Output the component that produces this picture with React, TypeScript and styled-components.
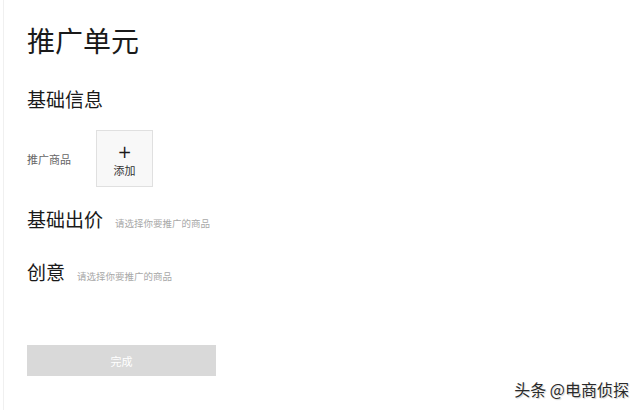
import React from 'react';
import styled, { createGlobalStyle } from 'styled-components';

const Global = createGlobalStyle`
    html, body {
        margin: 0;
        padding: 0;
        background: #ffffff;
    }
    body {
        font-family: "Noto Sans CJK SC", "Noto Sans", sans-serif;
        color: #222222;
    }
`;

const Page = styled.div`
    position: relative;
    width: 640px;
    height: 410px;
    box-sizing: border-box;
    overflow: hidden;
`;

const Panel = styled.main`
    margin-left: 3px;
    height: 100%;
    border-left: 1px solid #f0f0f0;
    padding: 20px 0 0 23px;
    box-sizing: border-box;
`;

const Title = styled.h1`
    margin: 0;
    font-size: 28px;
    font-weight: 400;
    line-height: 40px;
    color: #1a1a1a;
`;

const Section = styled.section<{ $gap: number }>`
    margin-top: ${(p) => p.$gap}px;
    display: flex;
    align-items: baseline;
    gap: 12px;
`;

const Heading = styled.h2`
    margin: 0;
    font-size: 19px;
    font-weight: 400;
    line-height: 26px;
    color: #1a1a1a;
`;

const Hint = styled.span`
    font-size: 9.5px;
    color: #a8a8a8;
`;

const Field = styled.div`
    margin-top: 18px;
    display: flex;
    align-items: center;
`;

const Label = styled.span`
    width: 69px;
    font-size: 11px;
    color: #666666;
`;

const AddBox = styled.button`
    width: 57px;
    height: 57px;
    box-sizing: border-box;
    border: 1px solid #e0e0e0;
    background: #f8f8f8;
    padding: 2px 0 0;
    display: flex;
    flex-direction: column;
    align-items: center;
    justify-content: center;
    font-family: inherit;
    cursor: pointer;
`;

const Plus = styled.span`
    font-family: "DejaVu Sans", sans-serif;
    font-size: 17px;
    line-height: 18px;
    margin-bottom: 2px;
    color: #1a1a1a;
`;

const AddText = styled.span`
    font-size: 11px;
    line-height: 14px;
    color: #333333;
`;

const Submit = styled.button`
    margin-top: 60px;
    width: 189px;
    height: 31px;
    border: none;
    background: #d9d9d9;
    color: #ffffff;
    font-family: inherit;
    font-size: 11px;
    display: block;
`;

const Watermark = styled.div`
    position: absolute;
    right: 11px;
    bottom: 9px;
    font-size: 16px;
    line-height: 23px;
    color: #2a2a2a;
    text-shadow: 0 0 2px rgba(255, 255, 255, 0.9), 1px 1px 1px rgba(0, 0, 0, 0.2);
`;

export default function App() {
    return (
        <Page>
            <Global />
            <Panel>
                <Title>推广单元</Title>
                <Section $gap={26}>
                    <Heading>基础信息</Heading>
                </Section>
                <Field>
                    <Label>推广商品</Label>
                    <AddBox>
                        <Plus>+</Plus>
                        <AddText>添加</AddText>
                    </AddBox>
                </Field>
                <Section $gap={19}>
                    <Heading>基础出价</Heading>
                    <Hint>请选择你要推广的商品</Hint>
                </Section>
                <Section $gap={27}>
                    <Heading>创意</Heading>
                    <Hint>请选择你要推广的商品</Hint>
                </Section>
                <Submit>完成</Submit>
            </Panel>
            <Watermark>头条 @电商侦探</Watermark>
        </Page>
    );
}
